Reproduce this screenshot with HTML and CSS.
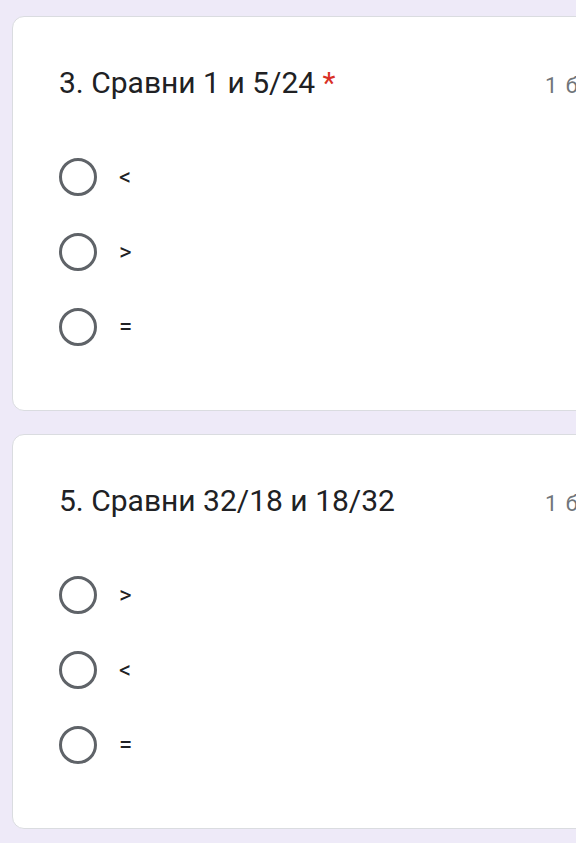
FILE: index.html
```html
<!DOCTYPE html>
<html lang="ru">
<head>
    <meta charset="UTF-8">
    <meta name="viewport" content="width=device-width, initial-scale=1.0">
    <title>Сравни дроби</title>
    <link rel="stylesheet" href="styles.css">
</head>
<body>
    <main class="questions">
        <div class="card">
            <div class="card-head">
                <div class="question-title">3. Сравни 1 и 5/24 <span class="required">*</span></div>
                <div class="points">1 балл</div>
            </div>
            <div class="options">
                <label class="option"><span class="radio"></span><span class="option-text">&lt;</span></label>
                <label class="option"><span class="radio"></span><span class="option-text">&gt;</span></label>
                <label class="option"><span class="radio"></span><span class="option-text">=</span></label>
            </div>
        </div>

        <div class="card">
            <div class="card-head">
                <div class="question-title">5. Сравни 32/18 и 18/32</div>
                <div class="points">1 балл</div>
            </div>
            <div class="options">
                <label class="option"><span class="radio"></span><span class="option-text">&gt;</span></label>
                <label class="option"><span class="radio"></span><span class="option-text">&lt;</span></label>
                <label class="option"><span class="radio"></span><span class="option-text">=</span></label>
            </div>
        </div>
    </main>
</body>
</html>
```

FILE: styles.css
```css
* {
    margin: 0;
    padding: 0;
    box-sizing: border-box;
    font-family: Roboto, 'Noto Sans', Arial, sans-serif;
}

body {
    background-color: #eeeaf8;
    overflow: hidden;
}

.questions {
    display: flex;
    flex-direction: column;
    gap: 23px;
    padding: 16px 0 0 12px;
}

.card {
    width: 640px;
    height: 395px;
    background-color: #fff;
    border: 1px solid #dadce0;
    border-radius: 12px;
    padding: 48px 24px 0 46px;
}

.card-head {
    display: flex;
    align-items: baseline;
}

.question-title {
    font-size: 30px;
    line-height: 36px;
    color: #202124;
    width: 486px;
}

.required {
    color: #d93025;
}

.points {
    font-size: 22px;
    color: #70757a;
    letter-spacing: 1.5px;
    white-space: nowrap;
}

.options {
    display: flex;
    flex-direction: column;
    gap: 37px;
    margin-top: 57px;
}

.option {
    display: flex;
    align-items: center;
    gap: 22px;
    height: 38px;
}

.radio {
    width: 38px;
    height: 38px;
    border: 3px solid #5f6368;
    border-radius: 50%;
}

.option-text {
    font-size: 24px;
    color: #202124;
}
```
